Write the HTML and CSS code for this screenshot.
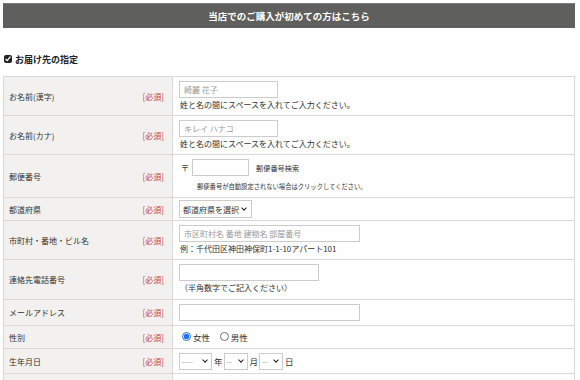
FILE: index.html
```html
<!DOCTYPE html>
<html lang="ja">
<head>
<meta charset="utf-8">
<title>お届け先の指定</title>
<link rel="stylesheet" href="styles.css">
</head>
<body>
<div id="orderForm">
	<h2 class="firstBar">当店でのご購入が初めての方はこちら</h2>

	<p class="destHead"><input type="checkbox" checked> お届け先の指定</p>

	<table class="formTable">
		<tr class="tall">
			<th><div class="thIn"><span>お名前(漢字)</span><span class="req">[必須]</span></div></th>
			<td>
				<input type="text" class="txt wName" placeholder="綺麗 花子">
				<div class="note">姓と名の間にスペースを入れてご入力ください。</div>
			</td>
		</tr>
		<tr class="tall">
			<th><div class="thIn"><span>お名前(カナ)</span><span class="req">[必須]</span></div></th>
			<td>
				<input type="text" class="txt wName" placeholder="キレイ ハナコ">
				<div class="note">姓と名の間にスペースを入れてご入力ください。</div>
			</td>
		</tr>
		<tr class="zipRow">
			<th><div class="thIn"><span>郵便番号</span><span class="req">[必須]</span></div></th>
			<td>
				<div class="zipLine">
					<span class="zipMark">〒</span>
					<input type="text" class="txt wZip">
					<span class="zipSearch">郵便番号検索</span>
				</div>
				<div class="zipNote">郵便番号が自動設定されない場合はクリックしてください。</div>
			</td>
		</tr>
		<tr class="selRow">
			<th><div class="thIn"><span>都道府県</span><span class="req">[必須]</span></div></th>
			<td>
				<span class="selWrap"><select class="sel wPref">
					<option>都道府県を選択</option>
				</select></span>
			</td>
		</tr>
		<tr class="tall">
			<th><div class="thIn"><span>市町村・番地・ビル名</span><span class="req">[必須]</span></div></th>
			<td>
				<input type="text" class="txt wAddr" placeholder="市区町村名 番地 建物名 部屋番号">
				<div class="note">例：千代田区神田神保町1-1-10アパート101</div>
			</td>
		</tr>
		<tr class="tall telRow">
			<th><div class="thIn"><span>連絡先電話番号</span><span class="req">[必須]</span></div></th>
			<td>
				<input type="text" class="txt wTel">
				<div class="note">（半角数字でご記入ください）</div>
			</td>
		</tr>
		<tr class="oneRow mailRow">
			<th><div class="thIn"><span>メールアドレス</span><span class="req">[必須]</span></div></th>
			<td><input type="text" class="txt wAddr"></td>
		</tr>
		<tr class="oneRow sexRow">
			<th><div class="thIn"><span>性別</span><span class="req">[必須]</span></div></th>
			<td>
				<label class="radio"><input type="radio" name="sex" checked>女性</label>
				<label class="radio"><input type="radio" name="sex">男性</label>
			</td>
		</tr>
		<tr class="oneRow">
			<th><div class="thIn"><span>生年月日</span><span class="req">[必須]</span></div></th>
			<td>
				<div class="birth">
					<span class="selWrap"><select class="sel wYear"><option>----</option></select></span>年
					<span class="selWrap"><select class="sel wDay"><option>--</option></select></span>月
					<span class="selWrap"><select class="sel wDay"><option>--</option></select></span>日
				</div>
			</td>
		</tr>
		<tr class="spacerRow">
			<th></th>
			<td></td>
		</tr>
	</table>
</div>
</body>
</html>
```

FILE: styles.css
```css
body {
	margin: 0;
	background-color: #ffffff;
	color: #333333;
	font-family: "Noto Sans CJK JP", "Liberation Sans", sans-serif;
	font-size: 8px;
}
#orderForm {
	width: 572px;
	margin: 0 0 0 3px;
	padding-top: 3px;
}
.firstBar {
	margin: 0;
	height: 25px;
	line-height: 25px;
	background-color: #5f5f5d;
	border-top: 1px solid #7a7a78;
	box-sizing: border-box;
	color: #ffffff;
	font-size: 9.5px;
	font-weight: bold;
	text-align: center;
}
.destHead {
	margin: 24px 0 0 0;
	height: 14px;
	display: flex;
	align-items: center;
	gap: 3px;
	font-size: 9px;
	font-weight: bold;
	color: #222222;
}
.destHead input {
	margin: 0 0 0 1px;
	width: 8px;
	height: 8px;
	accent-color: #222222;
}
.formTable {
	margin-top: 10px;
	width: 100%;
	border-collapse: collapse;
	border: 1px solid #d6d6d6;
}
.formTable th {
	width: 169px;
	background-color: #f2f1ef;
	border: 1px solid #d9d9d9;
	font-weight: normal;
	text-align: left;
	vertical-align: middle;
	padding: 0 8px 0 5px;
	box-sizing: border-box;
}
.thIn {
	display: flex;
	justify-content: space-between;
	align-items: center;
}
.req {
	color: #cc3b3b;
}
.formTable td {
	background-color: #fefefe;
	border: 1px solid #d9d9d9;
	padding: 4px 3px 4px 6px;
	vertical-align: top;
}
.txt {
	display: block;
	box-sizing: border-box;
	height: 17px;
	margin: 0;
	padding: 0 4px;
	border: 1px solid #cccccc;
	background-color: #ffffff;
	font-family: inherit;
	font-size: 8px;
	color: #333333;
}
.txt::placeholder {
	color: #9a9a9a;
}
.wName { width: 99px; }
.wZip { width: 57px; display: inline-block; }
.wAddr { width: 181px; }
.wTel { width: 140px; }
.note {
	line-height: 13px;
	margin-left: 1px;
}
.telRow td {
	padding-bottom: 5px;
}
.zipLine {
	display: flex;
	align-items: center;
	gap: 3px;
	padding-left: 2px;
}
.zipSearch {
	font-size: 7.2px;
	margin-left: 4px;
}
.zipNote {
	font-size: 6.3px;
	margin: 4px 0 0 18px;
	line-height: 13px;
}
.selRow td {
	padding-top: 2px;
	padding-bottom: 2px;
}
.selWrap {
	position: relative;
	display: inline-block;
	vertical-align: middle;
}
.selWrap::after {
	content: "";
	position: absolute;
	right: 6px;
	top: 6px;
	width: 3px;
	height: 3px;
	border-right: 1.5px solid #222222;
	border-bottom: 1.5px solid #222222;
	transform: rotate(45deg);
	pointer-events: none;
}
.sel {
	display: block;
	box-sizing: border-box;
	height: 18px;
	margin: 0;
	border: 1px solid #cccccc;
	border-radius: 0;
	background-color: #ffffff;
	font-family: inherit;
	font-size: 8px;
	color: #333333;
	padding: 0 12px 0 3px;
	appearance: none;
	-webkit-appearance: none;
}
.wPref { width: 73px; }
.oneRow td {
	padding-top: 3px;
	padding-bottom: 3px;
	height: 18px;
	vertical-align: middle;
}
.mailRow td {
	padding-bottom: 4px;
}
.sexRow td {
	padding-top: 2px;
	padding-bottom: 2px;
}
.radio {
	display: inline-flex;
	align-items: center;
	margin-right: 5px;
	font-size: 8.5px;
}
.radio input {
	margin: 0 2px 0 3px;
	width: 9px;
	height: 9px;
	accent-color: #1a73e8;
}
.birth {
	display: flex;
	align-items: center;
	font-size: 8.5px;
}
.birth .sel {
	height: 17px;
	color: #999999;
	padding-left: 2px;
}
.birth .selWrap::after {
	right: 5px;
	top: 5px;
}
.wYear { width: 33px; }
.wDay { width: 24px; }
.birth .selWrap {
	margin-right: 2px;
}
.birth .selWrap:not(:first-child) {
	margin-left: 1px;
}
.spacerRow th,
.spacerRow td {
	height: 30px;
}
```
